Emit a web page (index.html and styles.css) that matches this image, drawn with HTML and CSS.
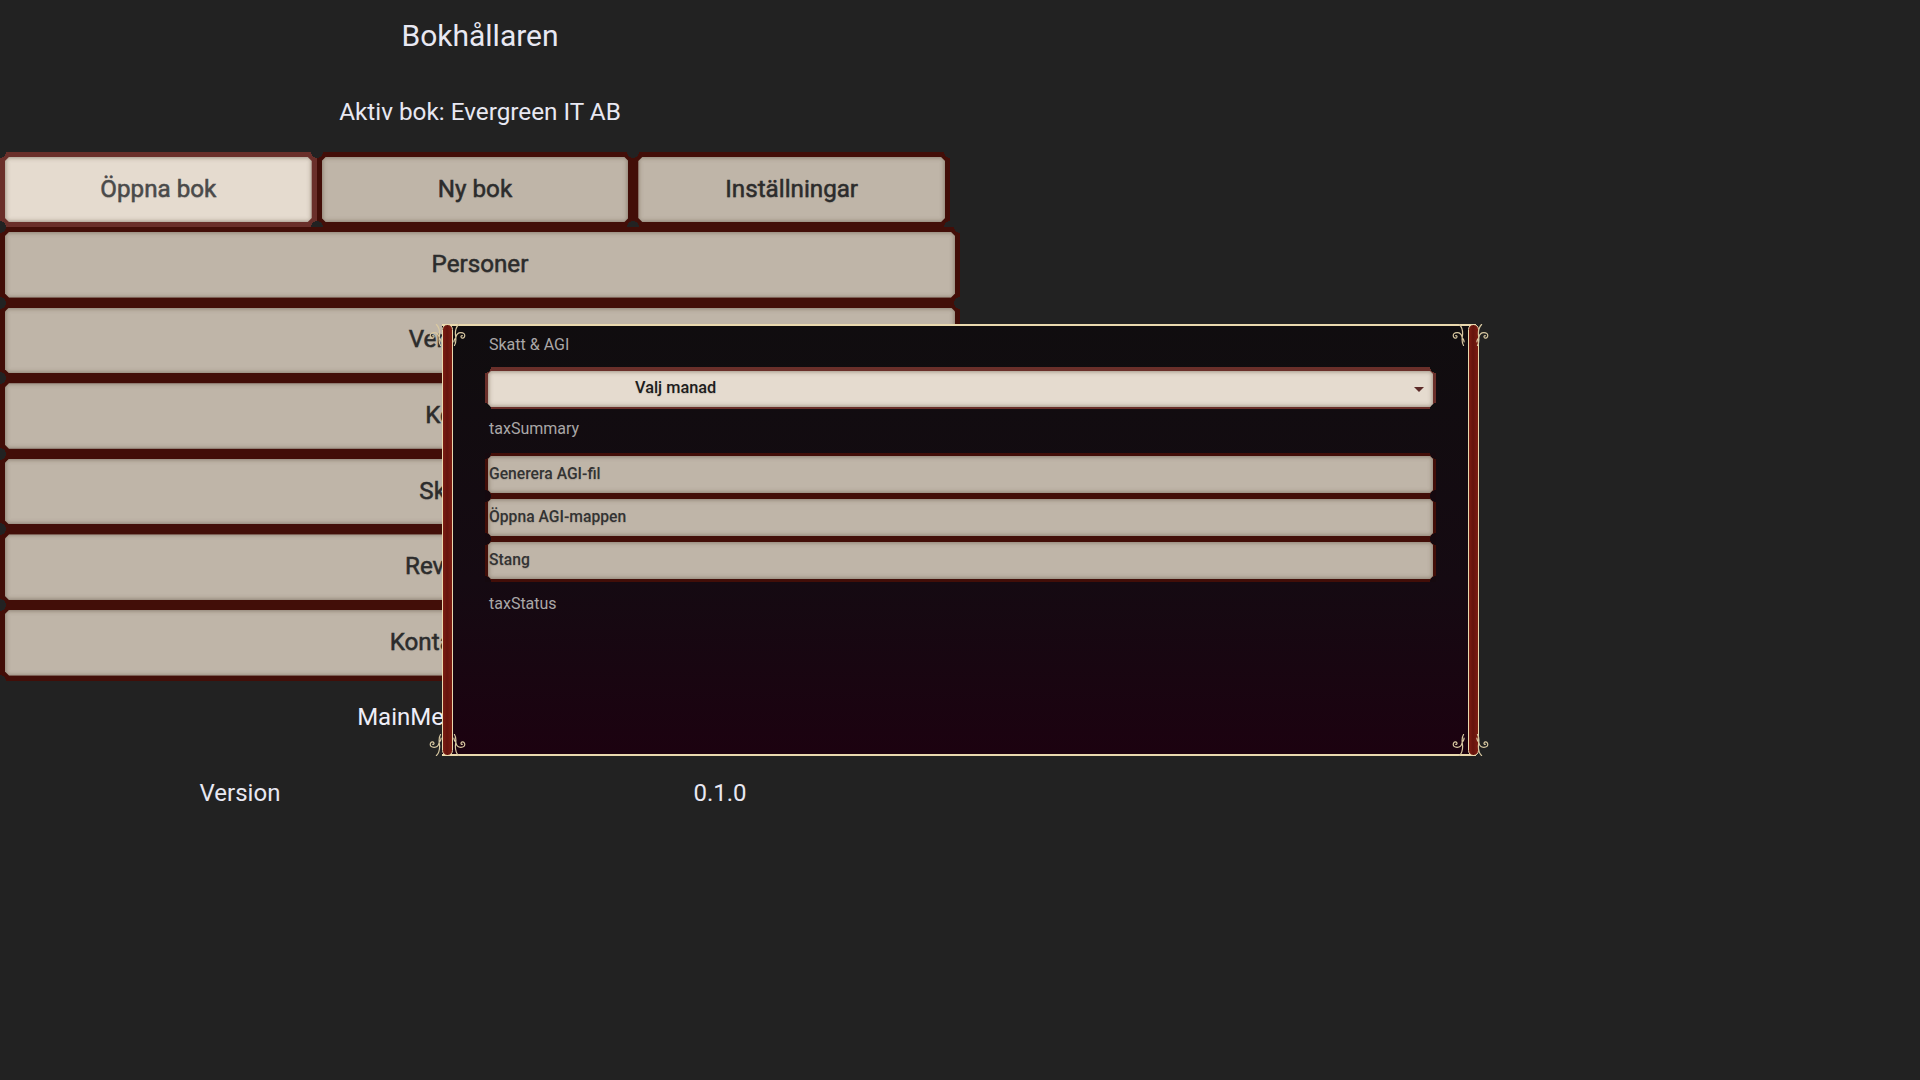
FILE: index.html
```html
<!DOCTYPE html>
<html lang="sv">
<head>
<meta charset="utf-8">
<title>Bokhållaren</title>
<link rel="stylesheet" href="styles.css">
</head>
<body>
<svg class="defs" width="0" height="0" aria-hidden="true">
  <symbol id="curl" viewBox="0 0 14 24">
    <path d="M1.5 23.5 C4.5 19 2.5 14 2.5 10.5 C2.5 7 3.5 3 6 0.5 M3 15 C3.5 11.5 6 9.5 8.5 9.5 C11.5 9.5 13.2 11 12.6 13.5 C12.1 15.6 9.6 16 8.8 14.4 C8.3 13.3 9.2 12.4 10.2 12.8 M2.2 16 C1.2 17.5 0.6 18.5 1 19.6" fill="none" stroke="#d9c9a2" stroke-width="1.3" stroke-linecap="round"/>
  </symbol>
</svg>
<main class="menu">
  <h1 class="title">Bokhållaren</h1>
  <p class="active-book">Aktiv bok: Evergreen IT AB</p>
  <div class="row">
    <button class="btn btn-active"><span class="fill">Öppna bok</span></button>
    <button class="btn"><span class="fill">Ny bok</span></button>
    <button class="btn"><span class="fill">Inställningar</span></button>
  </div>
  <div class="stack">
    <button class="btn"><span class="fill">Personer</span></button>
    <button class="btn"><span class="fill">Verifikationer</span></button>
    <button class="btn"><span class="fill">Kontoplan</span></button>
    <button class="btn"><span class="fill">Skatt &amp; AGI</span></button>
    <button class="btn"><span class="fill">Revisionslogg</span></button>
    <button class="btn"><span class="fill">Kontaktuppgifter</span></button>
  </div>
  <p class="status">MainMenuStatusLabel:</p>
  <div class="version">
    <span>Version</span>
    <span>0.1.0</span>
  </div>
</main>
<section class="dialog">
  <div class="bar bar-left"></div>
  <div class="body">
    <p class="label label-head">Skatt &amp; AGI</p>
    <button class="btn btn-small btn-select"><span class="fill">Valj manad<i class="arrow"></i></span></button>
    <p class="label label-summary">taxSummary</p>
    <div class="actions">
      <button class="btn btn-small"><span class="fill">Generera AGI-fil</span></button>
      <button class="btn btn-small"><span class="fill">Öppna AGI-mappen</span></button>
      <button class="btn btn-small"><span class="fill">Stang</span></button>
    </div>
    <p class="label label-status">taxStatus</p>
  </div>
  <div class="bar bar-right"></div>
  <svg class="curl c-tl-o"><use href="#curl"/></svg>
  <svg class="curl c-tl-i"><use href="#curl"/></svg>
  <svg class="curl c-tr-i"><use href="#curl"/></svg>
  <svg class="curl c-tr-o"><use href="#curl"/></svg>
  <svg class="curl c-bl-o"><use href="#curl"/></svg>
  <svg class="curl c-bl-i"><use href="#curl"/></svg>
  <svg class="curl c-br-i"><use href="#curl"/></svg>
  <svg class="curl c-br-o"><use href="#curl"/></svg>
</section>
</body>
</html>
```
FILE: styles.css
```css
* { box-sizing: border-box; }
html, body { margin: 0; height: 100%; }
body {
  background: #222222;
  font-family: Roboto, "Liberation Sans", sans-serif;
  color: #e8e8f2;
  overflow: hidden;
}
.defs { position: absolute; }
.menu { width: 960px; display: flex; flex-direction: column; }
.title {
  margin: 0;
  height: 72px;
  line-height: 72px;
  font-size: 30px;
  font-weight: 400;
  text-align: center;
}
.active-book {
  margin: 0;
  height: 80px;
  line-height: 80px;
  font-size: 24.3px;
  text-align: center;
}
.row { display: flex; height: 75px; width: 950px; }
.row .btn { flex: 1 1 0; }
.stack { display: flex; flex-direction: column; }
.stack .btn { height: 75.6px; }

.btn {
  --notch: #222222;
  --edge: #420e08;
  display: block;
  padding: 5px;
  margin: 0;
  border: 0;
  font: 400 24.2px Roboto, "Liberation Sans", sans-serif;
  -webkit-text-stroke: 0.5px currentColor;
  color: #2c2c2c;
  background:
    radial-gradient(circle 6px at 0 0, var(--notch) 98%, transparent),
    radial-gradient(circle 6px at 100% 0, var(--notch) 98%, transparent),
    radial-gradient(circle 6px at 0 100%, var(--notch) 98%, transparent),
    radial-gradient(circle 6px at 100% 100%, var(--notch) 98%, transparent),
    var(--edge);
}
.fill {
  display: flex;
  align-items: center;
  justify-content: center;
  height: 100%;
  padding-bottom: 2px;
  background: #bfb5a8;
  box-shadow: inset 0 0 5px rgba(90, 75, 60, 0.7);
  clip-path: polygon(4px 0, calc(100% - 4px) 0, 100% 4px, 100% calc(100% - 4px), calc(100% - 4px) 100%, 4px 100%, 0 calc(100% - 4px), 0 4px);
  text-shadow: 0 1px 1px rgba(0, 0, 0, 0.12);
}
.btn-active { --edge: #6a2f2a; color: #4a4a4a; }
.btn-active .fill { background: #e5dbcf; }

.status {
  margin: 0;
  height: 72px;
  line-height: 72px;
  font-size: 24px;
  text-align: center;
  color: #eeeef8;
}
.version {
  display: grid;
  grid-template-columns: 1fr 1fr;
  height: 80px;
  line-height: 80px;
  font-size: 24px;
  text-align: center;
}

.dialog {
  position: absolute;
  left: 442px;
  top: 324px;
  width: 1034px;
  height: 432px;
  display: flex;
  background: linear-gradient(#100d0f, #150a12 60%, #1c0210);
  border-top: 2px solid #ead9ae;
  border-bottom: 2px solid #ead9ae;
}
.bar {
  width: 11px;
  margin: -2px 0;
  flex: none;
  background: linear-gradient(90deg, #7d1d12, #65140d 45%, #7d1d12);
  border: 1px solid #ead9ae;
  border-radius: 6px;
}
.body {
  flex: 1;
  padding: 0 32px;
  display: flex;
  flex-direction: column;
}
.label {
  margin: 0;
  padding-left: 4px;
  font-size: 16px;
  line-height: 20px;
  color: #aaa7a7;
}
.label-head { margin-top: 9px; }
.label-summary { margin-top: 10px; }
.label-status { margin-top: 12px; }
.btn-small {
  --notch: #15090f;
  padding: 3px;
  font: 500 15.7px Roboto, "Liberation Sans", sans-serif;
  -webkit-text-stroke: 0;
  color: #333333;
  width: 951px;
}
.btn-small .fill {
  justify-content: flex-start;
  padding: 0 0 3px 1px;
  clip-path: polygon(3px 0, calc(100% - 3px) 0, 100% 3px, 100% calc(100% - 3px), calc(100% - 3px) 100%, 3px 100%, 0 calc(100% - 3px), 0 3px);
}
.btn-select {
  --edge: #6a2f2a;
  --notch: #100d0f;
  height: 42px;
  margin-top: 12px;
  padding: 4px 3px 2px;
  font-size: 16.3px;
  color: #1d1d1d;
}
.btn-select .fill {
  background: #e5dbcf;
  padding: 0 0 3px 147px;
  position: relative;
}
.arrow {
  position: absolute;
  right: 9px;
  top: 16px;
  border-left: 5px solid transparent;
  border-right: 5px solid transparent;
  border-top: 5px solid #5c2a28;
}
.actions { margin-top: 14px; display: flex; flex-direction: column; }
.actions .btn { height: 43px; }
.curl { position: absolute; width: 13px; height: 22px; overflow: visible; }
.c-tl-o { left: -13px; top: -2px; transform: scale(-1, 1); }
.c-tl-i { left: 11px; top: -2px; }
.c-tr-i { right: 11px; top: -2px; transform: scale(-1, 1); }
.c-tr-o { right: -13px; top: -2px; }
.c-bl-o { left: -13px; bottom: -2px; transform: scale(-1, -1); }
.c-bl-i { left: 11px; bottom: -2px; transform: scale(1, -1); }
.c-br-i { right: 11px; bottom: -2px; transform: scale(-1, -1); }
.c-br-o { right: -13px; bottom: -2px; transform: scale(1, -1); }
```
